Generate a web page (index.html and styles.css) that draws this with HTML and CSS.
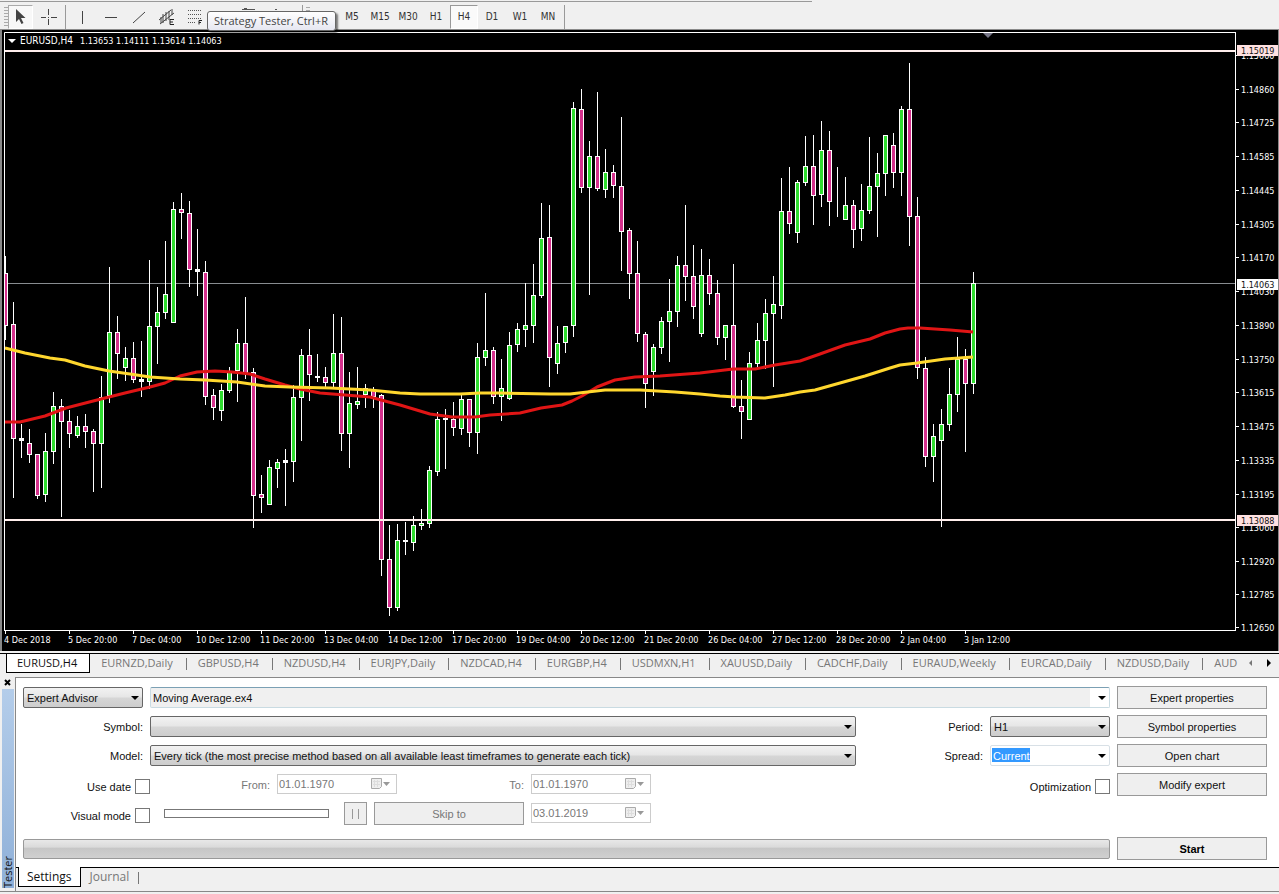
FILE: index.html
```html
<!DOCTYPE html>
<html lang="en">
<head>
<meta charset="utf-8">
<title>EURUSD,H4</title>
<link rel="stylesheet" href="styles.css">
</head>
<body>
<header class="toolbar">
  <span class="grip"></span>
  <button class="tool pressed" aria-label="Cursor"><svg width="20" height="20" viewBox="0 0 20 20"><path d="M5 2v13l3-3 2.500 5 2-1-2.500-5h4.500z" fill="#444"/></svg></button>
  <button class="tool" aria-label="Crosshair"><svg width="20" height="20" viewBox="0 0 20 20"><path d="M9.500 2v6M9.500 12v6M2 10.500h5M12 10.500h6M9 10.500h1" stroke="#444"/></svg></button>
  <span class="rule"></span>
  <button class="tool" aria-label="Vertical line"><svg width="20" height="20" viewBox="0 0 20 20"><path d="M9.500 4v13" stroke="#444"/></svg></button>
  <button class="tool" aria-label="Horizontal line"><svg width="20" height="20" viewBox="0 0 20 20"><path d="M4 10.500h12" stroke="#444"/></svg></button>
  <button class="tool" aria-label="Trendline"><svg width="20" height="20" viewBox="0 0 20 20"><path d="M4 16L16 5" stroke="#444"/></svg></button>
  <button class="tool" aria-label="Equidistant channel"><svg width="20" height="20" viewBox="0 0 20 20"><path d="M2 13L14 3M3 17L17 6M6 7v9M9 5v9M12 4v9M4 10v6M15 2v6" stroke="#444" fill="none"/><path d="M17 12.500h-4v5h4M13 15h3" stroke="#222" fill="none"/></svg></button>
  <button class="tool" aria-label="Fibonacci retracement"><svg width="20" height="20" viewBox="0 0 20 20"><path d="M3 3.500h14M3 7.500h14M3 11.500h14M3 15.500h8" stroke="#555" stroke-dasharray="1 1"/><path d="M17 13.500h-3v4M14 15.500h2" stroke="#222" fill="none"/></svg></button>
  <span class="hidden-tools"><svg width="90" height="20" viewBox="0 0 90 20"><path d="M33 4.500h13M35 3.500h3M66 4.500h2" stroke="#555"/></svg></span>
  <span class="rule"></span>
  <span class="grip"></span>
  <nav class="frames">
    <button aria-label="M1"></button><button>M5</button><button>M15</button><button>M30</button><button>H1</button><button class="pressed">H4</button><button>D1</button><button>W1</button><button>MN</button>
  </nav>
  <span class="rule"></span>
  <div class="tooltip" role="tooltip">Strategy Tester, Ctrl+R</div>
</header>

<main class="chart">
  <svg class="plot" role="img" aria-label="EURUSD H4 candlestick chart"><g id="plot" transform="translate(-4 -30)"></g></svg>
  <svg class="axis"><g id="axis" transform="translate(-1235 -30)"></g></svg>
</main>

<nav class="symbols">
  <a class="current" href="#">EURUSD,H4</a><a href="#">EURNZD,Daily</a><a href="#">GBPUSD,H4</a><a href="#">NZDUSD,H4</a><a href="#">EURJPY,Daily</a><a href="#">NZDCAD,H4</a><a href="#">EURGBP,H4</a><a href="#">USDMXN,H1</a><a href="#">XAUUSD,Daily</a><a href="#">CADCHF,Daily</a><a href="#">EURAUD,Weekly</a><a href="#">EURCAD,Daily</a><a href="#">NZDUSD,Daily</a><a href="#">AUD</a>
  <span class="scroll"><button aria-label="Scroll left"><svg width="5" height="8"><path d="M4 1L1 4l3 3z" fill="#777"/></svg></button><button aria-label="Scroll right"><svg width="5" height="8"><path d="M0 0l4 4-4 4z" fill="#000"/></svg></button></span>
</nav>

<section class="tester">
  <aside class="side">
    <button class="close" aria-label="Close"><svg width="7" height="7"><path d="M1 1l5 5M6 1L1 6" stroke="#000" stroke-width="2"/></svg></button>
    <div class="caption"><span>Tester</span></div>
  </aside>
  <div class="panel">
    <form class="form">
      <div class="combo kind"><select aria-label="Type"><option>Expert Advisor</option></select></div>
      <div class="combo expert"><select aria-label="Expert"><option>Moving Average.ex4</option></select></div>
      <button type="button" class="push">Expert properties</button>

      <label class="tag lead" for="symbol">Symbol:</label>
      <div class="combo"><select id="symbol"><option></option></select></div>
      <label class="tag" for="period">Period:</label>
      <div class="combo"><select id="period"><option>H1</option></select></div>
      <button type="button" class="push">Symbol properties</button>

      <label class="tag lead" for="model">Model:</label>
      <div class="combo"><select id="model"><option>Every tick (the most precise method based on all available least timeframes to generate each tick)</option></select></div>
      <label class="tag" for="spread">Spread:</label>
      <div class="combo edit"><input id="spread" type="text" value="Current"></div>
      <button type="button" class="push">Open chart</button>

      <label class="check lead">Use date <input type="checkbox"></label>
      <div class="line">
        <label class="tag off from" for="from">From:</label>
        <div class="date"><input id="from" value="01.01.1970" disabled><svg width="21" height="13"><path d="M1.500 1.500h10v8l-2 2h-8z" fill="#eee" stroke="#aaa"/><path d="M3 4.500h7M3 7.500h7M4.500 3v7M7.500 3v7" stroke="#ddd"/><path d="M13 5h7l-3.500 4z" fill="#999"/></svg></div>
        <label class="tag off to" for="to">To:</label>
        <div class="date"><input id="to" value="01.01.1970" disabled><svg width="21" height="13"><path d="M1.500 1.500h10v8l-2 2h-8z" fill="#eee" stroke="#aaa"/><path d="M3 4.500h7M3 7.500h7M4.500 3v7M7.500 3v7" stroke="#ddd"/><path d="M13 5h7l-3.500 4z" fill="#999"/></svg></div>
      </div>
      <label class="check opt">Optimization <input type="checkbox"></label>
      <button type="button" class="push">Modify expert</button>

      <label class="check lead">Visual mode <input type="checkbox"></label>
      <div class="line last">
        <input class="speed" type="range" aria-label="Speed" disabled>
        <button type="button" class="push pause" aria-label="Pause" disabled><svg width="9" height="11"><path d="M1.500 1v10M7.500 1v10" stroke="#999"/></svg></button>
        <button type="button" class="push skip" disabled>Skip to</button>
        <div class="date"><input aria-label="Skip to date" value="03.01.2019" disabled><svg width="21" height="13"><path d="M1.500 1.500h10v8l-2 2h-8z" fill="#eee" stroke="#aaa"/><path d="M3 4.500h7M3 7.500h7M4.500 3v7M7.500 3v7" stroke="#ddd"/><path d="M13 5h7l-3.500 4z" fill="#999"/></svg></div>
      </div>
    </form>
    <div class="run">
      <progress value="0" max="100" aria-label="Test progress"></progress>
      <button type="button" class="push start">Start</button>
    </div>
    <nav class="pages"><a class="current" href="#">Settings</a><a href="#">Journal</a></nav>
  </div>
</section>
<script src="chart.js"></script>
</body>
</html>
```
FILE: styles.css
```css
* { box-sizing: border-box; }
body {
  margin: 0;
  min-height: 100vh;
  display: flex;
  flex-direction: column;
  background: #f0f0f0;
  color: #111;
  font: 11px/14px "Liberation Sans", Arial, sans-serif;
}
button, input, select { font: inherit; color: inherit; margin: 0; }
button { padding: 0; border: 0; background: none; }
a { color: inherit; text-decoration: none; }

/* Toolbar */
.toolbar {
  position: relative;
  display: flex;
  align-items: center;
  height: 30px;
  padding: 4px 0 0 4px;
  border-bottom: 1px solid #8a8a8a;
  background: linear-gradient(#999, #999) 0 1px / 812px 1px no-repeat, #f0f0f0;
}
.grip { width: 4px; height: 20px; background: repeating-linear-gradient(#aaa 0 1px, #f0f0f0 1px 3px); }
.tool { display: flex; justify-content: center; align-items: center; width: 28px; height: 24px; }
.tool.pressed { width: 25px; border: 1px solid #aaa; border-right-color: #fff; border-bottom-color: #fff; background: #f8f8f8; margin-right: 2px; }
.rule { width: 1px; height: 24px; background: #999; margin: 0 3px 0 2px; }
.hidden-tools { flex: 0 0 91px; }
.frames { display: flex; font: 10px/14px "DejaVu Sans Condensed", "DejaVu Sans", sans-serif; color: #333; }
.frames button { width: 28px; height: 24px; }
.frames .pressed { background: #fafafa; border: 1px solid #fff; border-top-color: #999; border-left-color: #999; }
.tooltip {
  position: absolute;
  left: 207px;
  top: 11px;
  padding: 0 7px 1px 6px;
  border: 1px solid #666;
  border-radius: 3px;
  background: linear-gradient(#fff, #e6e7f1);
  box-shadow: 2px 2px 2px rgba(0, 0, 0, .5);
  color: #444;
  font: 11px/17px "Open Sans", sans-serif;
  white-space: nowrap;
  z-index: 1;
}

/* Chart */
.chart { display: grid; grid-template-columns: 1fr 44px; padding-left: 2px; height: 621px; background: #000; border-left: 2px solid #888; }
.plot, .axis { display: block; width: 100%; height: 100%; overflow: hidden; }
.chart text { font: 9px "DejaVu Sans Condensed", "DejaVu Sans", sans-serif; fill: #fff; }
.chart text.symbol { font-size: 10px; }
.chart text.dark { fill: #111; }

/* Symbol tabs */
.symbols {
  position: relative;
  display: flex;
  height: 22px;
  margin-top: 2px;
  padding-left: 6px;
  border-top: 1px solid #000;
  color: #777;
  font: 11px/18px "Open Sans", sans-serif;
  overflow: hidden;
}
.symbols a { flex: none; height: 19px; padding: 0 14px 0 11px; white-space: nowrap; }
.symbols a + a { background: linear-gradient(#777, #777) 100% 4px / 1px 12px no-repeat; }
.symbols .current { border: 1px solid #000; border-top: 0; background: #fff; color: #111; padding: 0 12px 0 10px; }
.scroll { position: absolute; right: 0; top: 0; display: flex; gap: 14px; padding: 0 7px 0 5px; height: 18px; background: #f0f0f0; }
.scroll button { display: flex; align-items: center; }

/* Tester */
.tester { flex: 1; display: flex; border-bottom: 1px solid #888; margin-bottom: 2px; }
.side { display: flex; flex-direction: column; flex: 0 0 15px; padding: 3px 0 3px 2px; }
.close { display: flex; align-items: center; justify-content: center; width: 11px; height: 9px; }
.caption { flex: 1; display: flex; align-items: flex-end; justify-content: center; width: 12px; background: linear-gradient(#b4cdea, #8fb0d8); margin-top: 2px; }
.caption span { writing-mode: vertical-rl; transform: rotate(180deg); font: 11px/12px "Open Sans", sans-serif; }
.panel { flex: 1; display: flex; flex-direction: column; background: #fff; border: 1px solid #888; border-width: 1px 0 0 1px; margin-top: 2px; }
.form {
  display: grid;
  grid-template-columns: 120px 7px 1fr 134px 120px 157px;
  grid-auto-rows: 23px;
  row-gap: 6px;
  align-items: center;
  padding: 8px 12px 0 7px;
}
.tag { padding-right: 7px; text-align: right; }
.lead { grid-column: 1 / 3; }
.off { color: #777; }
.kind { grid-column: 1; }
.expert { grid-column: 3 / 6; }
.combo { position: relative; height: 21px; }
.combo select, .combo input {
  display: block;
  width: 100%;
  height: 21px;
  padding: 0 20px 0 3px;
  appearance: none;
  border: 1px solid #666;
  border-radius: 2px;
  background: linear-gradient(#f2f2f2, #e6e6e6 48%, #d6d6d6 52%, #cdcdcd);
}
.combo::after {
  content: "";
  position: absolute;
  right: 4px;
  top: 9px;
  border: 4px solid transparent;
  border-top-color: #000;
  border-bottom: 0;
  pointer-events: none;
}
.combo.expert select { border-color: #7ba0b4 #c9dbe2 #c9dbe2; background: linear-gradient(90deg, #f0f0f0, #f0f0f0) 0 0 / calc(100% - 19px) 100% no-repeat, #fff; padding-left: 2px; }
.combo.edit input { border-color: #d8e0e6; color: #fff; padding-left: 2px; background: linear-gradient(#39f, #39f) 1px 2px / 38px 14px no-repeat, #fff; }
.push { height: 23px; border: 1px solid #999; background: #efefef; text-align: center; }
.form > .push { margin-left: 7px; grid-column: 6; }
.push:disabled { color: #777; }
.check { display: flex; justify-content: flex-end; align-items: center; gap: 4px; padding-top: 4px; }
.opt { grid-column: 4 / 6; }
.check input { appearance: none; width: 15px; height: 15px; border: 1px solid #777; background: #fff; }
.line { grid-column: 3; display: flex; align-items: center; }
.from { width: 127px; }
.to { width: 134px; }
.date { display: flex; align-items: center; width: 120px; height: 20px; border: 1px solid #ccc; padding-right: 5px; background: #fff; margin-bottom: 2px; }
.date input { flex: 1; width: 0; border: 0; padding: 0 1px; background: none; color: #777; }
.speed { appearance: none; width: 165px; height: 9px; margin: 0 15px 0 14px; border: 1px solid #777; background: #fff; }
.speed::-webkit-slider-thumb { appearance: none; width: 0; height: 0; }
.pause { width: 23px; margin-right: 7px; }
.pause svg { display: block; margin: auto; }
.skip { width: 150px; margin-right: 7px; }
.run { display: grid; grid-template-columns: 1fr 150px; gap: 7px; align-items: center; padding: 12px 12px 7px 7px; }
progress { appearance: none; display: block; width: 100%; height: 20px; border: 1px solid #999; border-radius: 2px; background: linear-gradient(#e8e8e8, #dadada 40%, #c6c6c6 45%, #d0d0d0); }
progress::-webkit-progress-bar { background: none; }
.start { font-weight: bold; color: #000; }
.pages { flex: 1; display: flex; border-top: 1px solid #000; background: #f0f0f0; color: #777; padding-left: 2px; font: 12px/18px "Open Sans", sans-serif; }
.pages a { height: 20px; padding: 0 10px 0 9px; background: linear-gradient(#777, #777) 100% 4px / 1px 12px no-repeat; }
.pages .current { background: #fff; color: #111; border: 1px solid #000; border-top: 0; margin-top: -1px; padding: 1px 8px 0; }
```
FILE: chart.js
```js
// Each candle: high, body top, body bottom, low, kind (g rising, m falling, w doji).
const candles = `256 273 325 340 m|302 324 438 498 m|424 438 440 458 w|429 443 454 463 m|454 454 495 499 m|433 451 494 502 g|392 406 451 464 g|399 406 421 517 m|410 421 433 448 m|416 426 435 438 g|414 426 431 448 m|429 431 443 492 m|376 397 443 488 g|267 332 395 403 g|316 332 353 379 m|347 358 367 381 g|342 358 379 383 m|341 379 381 397 w|260 326 381 389 g|287 312 326 364 g|241 294 312 319 g|202 209 322 323 g|193 209 212 239 m|201 213 269 287 m|229 269 271 296 w|261 272 396 405 m|389 395 407 420 m|384 390 410 421 g|367 372 390 393 g|329 343 370 402 g|297 343 372 379 m|368 372 495 528 m|475 494 497 513 m|460 467 504 505 g|459 462 468 488 g|449 460 462 506 w|385 397 461 482 g|349 355 397 441 g|329 355 374 401 m|354 376 377 382 w|367 377 382 389 m|314 353 382 387 g|317 353 433 451 m|372 403 433 468 g|367 401 404 409 g|384 388 394 408 g|387 390 396 408 m|394 395 559 576 m|525 559 607 616 m|524 540 607 611 g|522 540 541 555 w|516 525 542 551 g|509 523 525 530 g|466 470 523 528 g|412 419 471 476 g|409 418 419 469 w|402 419 427 436 m|395 399 428 435 g|399 399 432 447 m|343 357 432 454 g|293 350 357 366 g|347 350 396 404 m|359 388 396 421 g|332 345 398 400 g|323 329 344 352 g|283 325 329 347 g|264 295 325 343 g|203 238 295 298 g|205 237 357 387 m|326 343 363 374 g|326 326 342 353 g|102 108 325 337 g|89 109 187 193 m|141 156 187 295 g|92 156 188 191 m|149 172 189 198 g|165 172 185 198 m|117 186 231 271 m|228 230 273 299 m|241 273 333 342 m|332 334 383 408 m|344 347 371 396 g|317 321 347 354 g|279 311 321 362 g|256 265 311 327 g|205 265 276 301 m|245 276 306 319 m|249 275 333 337 g|259 275 293 305 m|280 293 337 345 m|325 325 337 360 g|264 325 406 408 m|380 406 411 439 m|352 363 419 420 g|323 340 363 368 g|299 313 340 369 g|276 304 313 387 g|178 211 305 319 g|167 211 223 234 m|180 182 232 243 g|136 166 182 186 g|135 166 195 225 m|121 150 194 207 g|131 150 201 226 m|167 201 201 217 w|177 205 219 220 g|200 205 229 248 m|184 210 228 241 g|137 186 210 214 g|153 173 186 237 g|135 135 173 196 g|133 145 172 188 m|106 109 172 196 g|63 109 216 246 m|197 216 367 379 m|357 368 456 467 m|424 436 456 482 g|409 424 440 527 g|368 394 424 431 g|337 359 394 412 g|349 359 383 452 m|272 283 383 394 g`;
const red = "5,422 20,422 45,416 66,408 101,399 125,393 150,387 165,383 180,376 197,372 215,371 232,372 250,374 265,379 285,385 300,389 320,393 345,395 370,397 381,400 400,405 430,414 452,417 475,417 490,415 520,413 541,408 562,405 572,401 582,396 597,387 615,380 635,377 660,376 700,373 733,369 755,369 775,365 800,361 820,354 845,345 870,339 885,333 900,329 908,328 920,328 950,330 973,332";
const yellow = "5,348 25,353 50,358 65,360 85,366 109,371 130,374 150,377 180,379 205,380 237,382 265,386 290,387 330,388 370,390 400,393 420,394 460,394 480,393 500,393 550,394 570,394 605,390 640,390 675,392 700,394 720,396 735,397 765,398 785,395 800,392 815,390 840,383 865,376 890,368 900,365 917,363 945,359 973,357";
const times = ["4 Dec 2018", "5 Dec 20:00", "7 Dec 04:00", "10 Dec 12:00", "11 Dec 20:00", "13 Dec 04:00", "14 Dec 12:00", "17 Dec 20:00", "19 Dec 04:00", "20 Dec 12:00", "21 Dec 20:00", "26 Dec 04:00", "27 Dec 12:00", "28 Dec 20:00", "2 Jan 04:00", "3 Jan 12:00"];
const prices = [["1.15000", 56], ["1.14860", 90], ["1.14725", 123], ["1.14585", 157], ["1.14445", 191], ["1.14305", 225], ["1.14170", 258], ["1.14030", 292], ["1.13890", 326], ["1.13750", 360], ["1.13615", 393], ["1.13475", 427], ["1.13335", 461], ["1.13195", 495], ["1.13060", 528], ["1.12920", 562], ["1.12785", 595], ["1.12650", 628]];
const marks = [["1.15019", 50, "#ffe1e1"], ["1.14063", 284, "#fff"], ["1.13088", 520, "#ffe1e1"]];
const fills = { g: "#2fdc2f", m: "#d4308c", w: "#fff" };

let s = '<path d="M4 283.5H4000" stroke="#888c90"/>';
candles.split("|").forEach((row, i) => {
  const [high, top, bottom, low, kind] = row.split(" ");
  const x = 5 + i * 8;
  s += `<rect x="${x}" y="${high}" width="1" height="${low - high}" fill="#fff"/>`;
  s += `<rect x="${x - 1.5}" y="${+top + 0.5}" width="4" height="${bottom - top}" fill="${fills[kind]}" stroke="#fff"/>`;
});
s += '<path d="M4 51H4000M4 520H4000" stroke="#ffeeec" stroke-width="2"/>';
s += `<polyline points="${red}" fill="none" stroke="#e01515" stroke-width="3" stroke-linejoin="round"/>`;
s += `<polyline points="${yellow}" fill="none" stroke="#ffd72e" stroke-width="3" stroke-linejoin="round"/>`;
s += '<path d="M4.500 630.500V32.500H4000M4 630.500H4000" fill="none" stroke="#fff"/>';
s += '<path d="M983 33h10l-5 5z" fill="#777788"/><path d="M8 39h8l-4 4z" fill="#fff"/>';
s += '<text class="symbol" x="20" y="44">EURUSD,H4</text><text x="80" y="44">1.13653 1.14111 1.13614 1.14063</text>';
times.forEach((t, i) => {
  s += `<path d="M${5.5 + i * 64} 631v3" stroke="#fff"/><text x="${4 + i * 64}" y="643">${t}</text>`;
});
document.getElementById("plot").innerHTML = s;

let a = '<path d="M0.500 32V631M1235.500 32V631" stroke="#fff"/><path d="M1278.500 30V651" stroke="#888"/>';
prices.forEach(([t, y]) => {
  a += `<path d="M1236 ${y - 0.5}h3" stroke="#fff"/><text x="1241" y="${y + 3}">${t}</text>`;
});
marks.forEach(([t, y, c]) => {
  a += `<rect x="1237" y="${y - 5}" width="41" height="11" fill="${c}"/><text class="dark" x="1241" y="${y + 4}">${t}</text>`;
});
document.getElementById("axis").innerHTML = a;
```
